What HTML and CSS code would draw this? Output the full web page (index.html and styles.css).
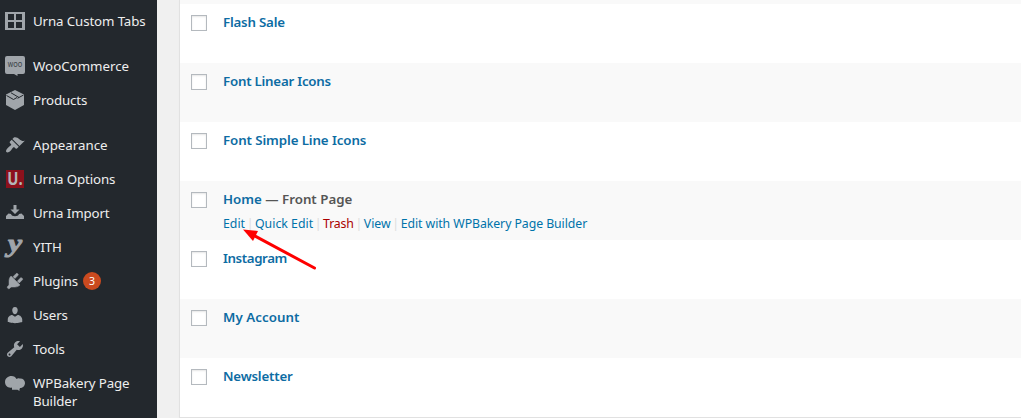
FILE: index.html
```html
<!DOCTYPE html>
<html lang="en">
<head>
<meta charset="utf-8">
<title>Pages</title>
<link rel="stylesheet" href="styles.css">
</head>
<body>
<div class="admin">
  <nav class="sidebar">
    <a class="item"><svg class="icon" viewBox="0 0 20 20"><path fill-rule="evenodd" d="M0 1h20v18H0zM3 3v6h6V3zM11 3v6h6V3zM3 11v6h6v-6zM11 11v6h6v-6z"/></svg><span class="label tabs">Urna Custom Tabs</span></a>
    <div class="separator"></div>
    <a class="item"><svg class="icon" viewBox="0 0 20 20"><path d="M2 0h16a2 2 0 0 1 2 2v14a2 2 0 0 1-2 2h-5.500v2l-3.500-2H2a2 2 0 0 1-2-2V2a2 2 0 0 1 2-2z"/><text class="woo-mark" x="2.8" y="11.3" textLength="14.4" lengthAdjust="spacingAndGlyphs">WOO</text></svg><span class="label woo">WooCommerce</span></a>
    <a class="item"><svg class="icon" viewBox="0 0 20 20"><path d="M10 0l9 4.500v10.500l-9 5-9-5V4.500z"/><path class="cut" d="M1.500 5.500L8.500 9.500 12 7.500M6 2.800l8 4.700M18.500 5l-6 3.300"/></svg><span class="label products">Products</span></a>
    <div class="separator"></div>
    <a class="item"><svg class="icon" viewBox="0 0 20 20"><path d="M14.480 11.060L7.410 3.990l1.500-1.500c.5-.56 2.300-.47 3.510.32 1.210.8 1.430 1.280 2.910 2.100 1.180.64 2.450 1.260 4.450.85zm-.71.71L6.700 4.700 4.930 6.470c-.39.39-.39 1.020 0 1.410l1.060 1.060c.39.39.39 1.030 0 1.420-.6.6-1.430 1.110-2.210 1.690-.35.26-.7.53-1.010.84C1.430 14.230.4 16.080 1.400 17.070c.99 1 2.840-.03 4.180-1.360.31-.31.58-.66.85-1.020.57-.78 1.080-1.610 1.690-2.210.39-.39 1.020-.39 1.410 0l1.060 1.060c.39.39 1.020.39 1.410 0z"/></svg><span class="label appearance">Appearance</span></a>
    <a class="item"><svg class="icon" viewBox="0 0 20 20"><path class="red" d="M1 1h18v18H1z"/><text class="u-mark" x="2.3" y="16.3" textLength="15.5" lengthAdjust="spacingAndGlyphs">U.</text></svg><span class="label options">Urna Options</span></a>
    <a class="item"><svg class="icon" viewBox="0 0 20 20"><path d="M8.500 2h3v4.500h3L10 11 5.500 6.500h3z"/><path d="M3.500 10.500L6 11c.5 3 7.500 3 8 0l2.500-.5L19 13v3H1v-3z"/></svg><span class="label import">Urna Import</span></a>
    <a class="item"><svg class="icon" viewBox="0 0 20 20"><text class="y-mark" x="3" y="15" textLength="14" lengthAdjust="spacingAndGlyphs">y</text></svg><span class="label yith">YITH</span></a>
    <a class="item"><svg class="icon plug" viewBox="0 0 20 20"><path d="M13.110 4.360L9.870 7.600 8 5.730l3.240-3.240c.35-.34 1.050-.2 1.560.32.520.51.66 1.210.31 1.550zm-8 1.770l.91-1.120 9.010 9.010-1.190.84c-.71.71-2.630 1.160-3.820 1.160H6.140L4.900 17.260c-.59.59-1.540.59-2.120 0-.59-.58-.59-1.530 0-2.120l1.240-1.240v-3.880c0-1.130.4-3.190 1.090-3.890zm7.260 3.970l3.240-3.240c.34-.35 1.040-.21 1.550.31.52.51.66 1.210.31 1.550l-3.240 3.250z"/></svg><span class="label plugins">Plugins</span><span class="badge">3</span></a>
    <a class="item"><svg class="icon" viewBox="0 0 20 20"><path d="M10 9.250c-2.270 0-2.730-3.440-2.730-3.440C7 4.020 7.820 2 9.970 2c2.160 0 2.980 2.020 2.710 3.810 0 0-.41 3.440-2.680 3.440zm0 2.570L12.720 10c2.390 0 4.520 2.330 4.520 4.530v2.490s-3.650 1.130-7.240 1.130c-3.650 0-7.240-1.130-7.240-1.130v-2.490c0-2.250 1.940-4.480 4.470-4.480z"/></svg><span class="label users">Users</span></a>
    <a class="item"><svg class="icon" viewBox="0 0 20 20"><path d="M16.680 9.770c-1.340 1.340-3.300 1.670-4.950.99l-5.410 6.520c-.99.99-2.590.99-3.580 0s-.99-2.590 0-3.570l6.520-5.420c-.68-1.650-.35-3.610.99-4.950 1.280-1.280 3.120-1.620 4.720-1.060l-2.890 2.890 2.820 2.820 2.860-2.870c.53 1.580.18 3.390-1.080 4.650zM3.810 16.210c.4.39 1.040.39 1.430 0 .4-.4.4-1.040 0-1.430-.39-.4-1.030-.4-1.430 0-.39.39-.39 1.030 0 1.430z"/></svg><span class="label tools">Tools</span></a>
    <a class="item"><svg class="icon" viewBox="0 0 20 20"><path d="M6.500 3c2.500 0 4 1 5 3 1-.7 2-.8 3-.5 3-.5 5.500 1.500 5.500 4.500 0 3-2.500 5-5 5l-.5 1.500V18l-2-1.200H7V14.500C3 15.500 0 12.500 0 9c0-3.500 3-6 6.500-6z"/></svg><span class="label bakery">WPBakery Page<br>Builder</span></a>
  </nav>
  <main class="content">
    <div class="table">
      <div class="row previous"></div>
      <div class="row"><span class="check"></span><div class="cell"><a class="title flash">Flash Sale</a></div></div>
      <div class="row alt"><span class="check"></span><div class="cell"><a class="title linear">Font Linear Icons</a></div></div>
      <div class="row"><span class="check"></span><div class="cell"><a class="title simple">Font Simple Line Icons</a></div></div>
      <div class="row alt"><span class="check"></span><div class="cell">
        <div class="title home"><a>Home</a><span class="state"> — Front Page</span></div>
        <div class="actions"><a class="edit">Edit</a><i>|</i><a class="quick">Quick Edit</a><i>|</i><a class="trash">Trash</a><i>|</i><a class="view">View</a><i>|</i><a class="builder">Edit with WPBakery Page Builder</a></div>
      </div></div>
      <div class="row"><span class="check"></span><div class="cell"><a class="title instagram">Instagram</a></div></div>
      <div class="row alt"><span class="check"></span><div class="cell"><a class="title account">My Account</a></div></div>
      <div class="row"><span class="check"></span><div class="cell"><a class="title newsletter">Newsletter</a></div></div>
    </div>
  </main>
  <svg class="arrow" viewBox="0 0 76 44"><path d="M10 6l61.500 33"/><path class="head" d="M0 0.500l15 1.500-2.500 5-2.500 5z"/></svg>
</div>
</body>
</html>
```
FILE: styles.css
```css
* { box-sizing: border-box; }
body { margin: 0; background: #f0f0f0; font-family: "Noto Sans", "Open Sans", sans-serif; }
.admin { position: relative; display: flex; width: 1021px; height: 418px; overflow: hidden; }
.sidebar { width: 157px; flex: none; padding-top: 4px; background: #23282d; }
.item { display: flex; min-height: 34px; padding: 7px 0 0 5px; color: #eee; font-size: 14px; line-height: 18px; }
.separator { height: 11px; }
.icon { width: 20px; height: 20px; flex: none; margin-right: 8px; fill: #a0a5aa; overflow: visible; }
.label { white-space: nowrap; padding-top: 1px; font-size: 13.3px; letter-spacing: -.12px; }
.woo, .appearance { letter-spacing: 0; }
.cut { fill: none; stroke: #23282d; stroke-width: 1; }
.red { fill: #8c111c; }
.woo-mark { font: 600 7px "Open Sans", sans-serif; fill: #41474c; }
.u-mark { font: bold 17.5px "Open Sans", sans-serif; fill: #b4b6b8; }
.y-mark { font: italic bold 26px "Liberation Serif", serif; stroke: #a0a5aa; stroke-width: 1; }
.plug { stroke: #a0a5aa; stroke-width: .5; }
.badge { width: 18px; height: 18px; margin: 1px 0 0 5px; border-radius: 50%; background: #ca4a1f; color: #fff; font-size: 10.5px; line-height: 18px; text-align: center; }
.content { flex: 1; padding-left: 22px; }
.table { height: 418px; border-left: 1px solid #e1e1e1; border-bottom: 1px solid #e1e1e1; background: #fff; box-shadow: 0 1px 1px rgba(0,0,0,.04); }
.row { display: flex; height: 59px; padding: 11px 0 0 11px; }
.row.previous { height: 4px; padding: 0; background: #f9f9f9; }
.alt { background: #f9f9f9; }
.check { width: 16px; height: 16px; flex: none; margin-right: 16px; border: 1px solid #b4b9be; background: #fff; box-shadow: inset 0 1px 2px rgba(0,0,0,.1); }
.cell { white-space: nowrap; }
.title { display: block; margin-top: -3px; color: #0d6ca3; font-size: 13.3px; font-weight: 600; line-height: 20px; }
.flash, .newsletter { letter-spacing: -.2px; }
.linear { letter-spacing: -.23px; }
.simple { letter-spacing: -.1px; }
.instagram { letter-spacing: -.4px; }
.account { letter-spacing: .05px; }
.state { color: #555; }
.actions { display: flex; margin-top: 5px; color: #0073aa; font-size: 12.3px; line-height: 19px; }
.actions i { width: 10px; color: #ddd; font-style: normal; text-align: center; }
.actions .trash { color: #a00; letter-spacing: -.15px; }
.builder { letter-spacing: -.07px; }
.arrow { position: absolute; left: 243px; top: 229px; width: 76px; height: 44px; fill: none; stroke: #fe0000; stroke-width: 3; stroke-linecap: round; }
.arrow .head { fill: #fe0000; stroke: none; }
```
